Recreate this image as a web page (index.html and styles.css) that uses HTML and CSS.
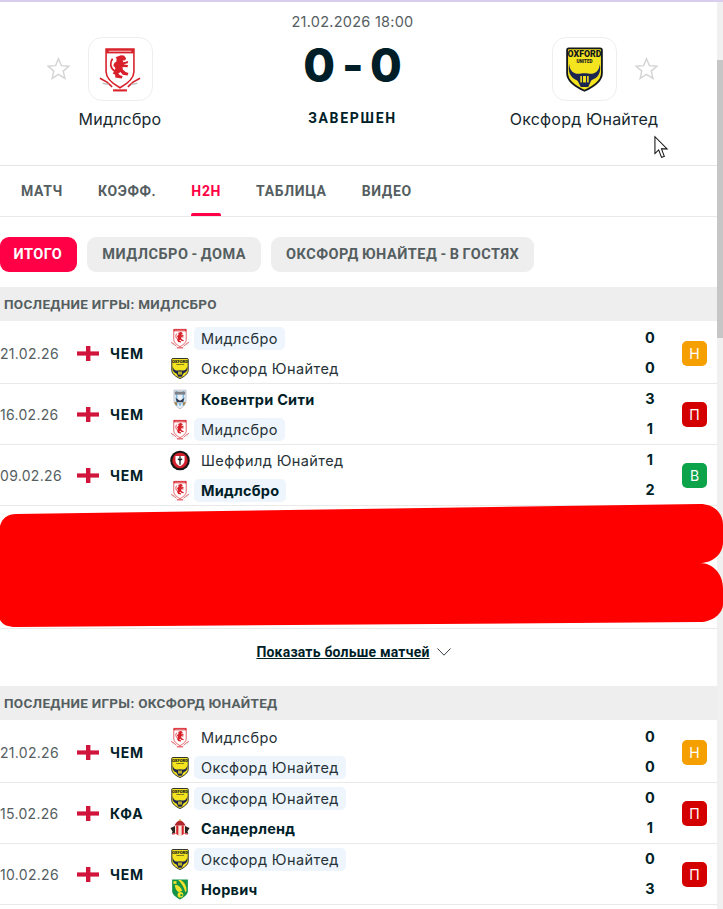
FILE: index.html
```html
<!DOCTYPE html>
<html lang="ru">
<head>
<meta charset="utf-8">
<title>Мидлсбро - Оксфорд Юнайтед</title>
<link rel="stylesheet" href="styles.css">
</head>
<body>
<svg class="sprite" width="0" height="0" aria-hidden="true">
  <defs>
    <symbol id="star" viewBox="0 0 24 24"><path d="M12 1.800l3 7.200 7.800.6-5.900 5.100 1.800 7.600L12 18.200 5.300 22.300l1.800-7.600L1.200 9.600 9 9z" fill="none" stroke="#d4d4d4" stroke-width="1.500"/></symbol>
    <symbol id="flag" viewBox="0 0 22 15"><rect width="22" height="15" fill="#fff"/><rect x="9" width="4.400" height="15" fill="#d0143c"/><rect y="5.400" width="22" height="4.200" fill="#d0143c"/></symbol>
    <symbol id="mid" viewBox="0 0 48 54">
      <path d="M8 3.500h32v26c0 8-8 14-16 18.500C16 43.500 8 37.500 8 29.500z" fill="#fff" stroke="#d8202a" stroke-width="1.800"/>
      <rect x="8" y="3.500" width="32" height="5" fill="#d8202a"/>
      <rect x="11" y="5.400" width="26" height="1.200" fill="#f4c6c8"/>
      <path d="M25 10.500l3.500.5 2.500 3-1 2.400-3 .2 1 2 5.500-1.400-.6 2.600-4.900 1.300 5.500 1-1 2.400-5.500-.4.2 3 3.200 2.800 3.300 1-1 3-5.500-1-2.600-3-2.600 1.600 2 2.200 3 .8-1 2.800-7.500-1.200v-3l-2.800-1.400 2-3.400 1-3-2.400-3 1.400-3 2.200-1.600.2-3-1.200-1.800z" fill="#d8202a"/>
      <path d="M18 29C12.500 25 12 19 15.500 14.500" fill="none" stroke="#d8202a" stroke-width="2"/>
      <path d="M1 37l8 4.500 6 5.500M47 37l-8 4.500-6 5.500" fill="none" stroke="#d8202a" stroke-width="1.800"/>
      <path d="M4 43l7 1M44 43l-7 1" stroke="#b9bcc0" stroke-width="1.400"/>
      <path d="M16 51h16" stroke="#d8202a" stroke-width="2.400"/>
    </symbol>
    <symbol id="oxf" viewBox="0 0 40 48">
      <path d="M3 1.200h34a1.800 1.800 0 0 1 1.800 1.800v25c0 8-9 14.500-18.800 19C10.200 42.500 1.200 36 1.200 28V3A1.800 1.800 0 0 1 3 1.200z" fill="#f4e31f" stroke="#14181f" stroke-width="2"/>
      <text x="20" y="10.500" text-anchor="middle" class="oxf-a">OXFORD</text>
      <text x="20" y="16.500" text-anchor="middle" class="oxf-b">UNITED</text>
      <path d="M3.500 18c.5 6 3 9.500 8 10.500 2.500.5 5-.5 8.500-.5s6 1 8.500.5c5-1 7.500-4.500 8-10.500 1.500 7.500-.5 14-7 16.500-1.500.5-2.500 1.500-3 3l-2.500 5.500h-8L13.500 38c-.5-1.500-1.500-2.500-3-3C4 32 2 25.500 3.500 18z" fill="#1c2550"/>
      <path d="M15.500 31h9v7h-9z" fill="#f4e31f"/>
      <path d="M17.800 31v8M22.200 31v8" stroke="#1c2550" stroke-width="1.200"/>
    </symbol>
    <symbol id="cov" viewBox="0 0 40 56">
      <path d="M4 3h32v28c0 10-8 17-16 22C12 48 4 41 4 31z" fill="#eef1f5" stroke="#98a2ae" stroke-width="1.600"/>
      <path d="M11 5v40M29 5v40" stroke="#7fbbe4" stroke-width="4.500"/>
      <path d="M6 7h28v8H6z" fill="#7e8187"/>
      <path d="M8 23l12 8 12-8-4 12H12z" fill="#2f3a50"/>
      <path d="M5 34l7 2v8l-5-3zM35 34l-7 2v8l5-3z" fill="#a88747"/>
      <path d="M15 37h10l-5 10z" fill="#7fbbe4"/>
    </symbol>
    <symbol id="shf" viewBox="0 0 48 48">
      <circle cx="24" cy="24" r="23.500" fill="#151515"/>
      <circle cx="24" cy="24" r="18.500" fill="#d4202c"/>
      <path d="M13 13h22v11c0 6-5 11-11 14-6-3-11-8-11-14z" fill="#fff"/>
      <path d="M24 14v20M19 20l5 4 5-4" fill="none" stroke="#151515" stroke-width="3"/>
    </symbol>
    <symbol id="sun" viewBox="0 0 48 48">
      <path d="M11 17h26v15c0 5-6 9-13 11-7-2-13-6-13-11z" fill="#f6e7da"/>
      <path d="M15 17h5v23l-5-3zM28 17h5v20l-5 3z" fill="#d8202a"/>
      <path d="M11 17c2-7 7-11 13-13 6 2 11 6 13 13z" fill="#b2242d"/>
      <circle cx="24" cy="4" r="2.500" fill="#d8a74a"/>
      <path d="M1 23l11-5v16l-8 3 2-6zM47 23l-11-5v16l8 3-2-6z" fill="#2a2320"/>
      <path d="M5 37l8-3v3l-7 2zM43 37l-8-3v3l7 2z" fill="#d8202a"/>
    </symbol>
    <symbol id="nor" viewBox="0 0 40 48">
      <path d="M2 1h36v26c0 9-9 15-18 20C11 42 2 36 2 27z" fill="#159447"/>
      <path d="M16 2h6c8 5 13 13 13 24l-3 4C30 19 24 10 16 2z" fill="#f5e22a"/>
      <path d="M8 14c7-2 14 4 17 13l-8 3C12 27 9 21 8 14z" fill="#f5e22a"/>
      <circle cx="21" cy="36" r="6.500" fill="#f5e22a"/>
      <circle cx="23" cy="37" r="2.500" fill="#159447"/>
      <path d="M5 5h7v6H5z" fill="#f5e22a"/>
    </symbol>
  </defs>
</svg>

<div class="page">
  <main class="main">
    <header class="match">
      <div class="match-date">21.02.2026 18:00</div>
      <div class="match-teams">
        <div class="side side-home">
          <svg class="star"><use href="#star"/></svg>
          <div class="team-block">
            <div class="tile"><svg class="tile-logo tile-mid"><use href="#mid"/></svg></div>
            <div class="team-name">Мидлсбро</div>
          </div>
        </div>
        <div class="centre">
          <div class="score"><span>0</span><span class="dash">-</span><span>0</span></div>
          <div class="status">ЗАВЕРШЕН</div>
        </div>
        <div class="side side-away">
          <div class="team-block">
            <div class="tile"><svg class="tile-logo tile-oxf"><use href="#oxf"/></svg></div>
            <div class="team-name">Оксфорд Юнайтед</div>
          </div>
          <svg class="star"><use href="#star"/></svg>
        </div>
      </div>
      <svg class="cursor" viewBox="0 0 16 24"><path d="M1 1v18l4-4 3 8 3-1-3-8h6z" fill="#fff" stroke="#111" stroke-width="1.100"/></svg>
    </header>

    <nav class="tabs">
      <a class="tab">МАТЧ</a>
      <a class="tab">КОЭФФ.</a>
      <a class="tab tab-active">H2H</a>
      <a class="tab">ТАБЛИЦА</a>
      <a class="tab">ВИДЕО</a>
    </nav>

    <div class="pills">
      <a class="pill pill-active">ИТОГО</a>
      <a class="pill">МИДЛСБРО - ДОМА</a>
      <a class="pill">ОКСФОРД ЮНАЙТЕД - В ГОСТЯХ</a>
    </div>

    <section>
      <h2 class="section-head">ПОСЛЕДНИЕ ИГРЫ: МИДЛСБРО</h2>
      <div class="row">
        <div class="date">21.02.26</div><svg class="flag"><use href="#flag"/></svg><div class="comp">ЧЕМ</div>
        <div class="teams">
          <div class="line"><svg class="logo"><use href="#mid"/></svg><span class="tname hl">Мидлсбро</span></div>
          <div class="line"><svg class="logo"><use href="#oxf"/></svg><span class="tname">Оксфорд Юнайтед</span></div>
        </div>
        <div class="goals"><span>0</span><span>0</span></div>
        <div class="res res-d">Н</div>
      </div>
      <div class="row">
        <div class="date">16.02.26</div><svg class="flag"><use href="#flag"/></svg><div class="comp">ЧЕМ</div>
        <div class="teams">
          <div class="line"><svg class="logo"><use href="#cov"/></svg><span class="tname win">Ковентри Сити</span></div>
          <div class="line"><svg class="logo"><use href="#mid"/></svg><span class="tname hl">Мидлсбро</span></div>
        </div>
        <div class="goals"><span>3</span><span>1</span></div>
        <div class="res res-l">П</div>
      </div>
      <div class="row">
        <div class="date">09.02.26</div><svg class="flag"><use href="#flag"/></svg><div class="comp">ЧЕМ</div>
        <div class="teams">
          <div class="line"><svg class="logo"><use href="#shf"/></svg><span class="tname">Шеффилд Юнайтед</span></div>
          <div class="line"><svg class="logo"><use href="#mid"/></svg><span class="tname hl win">Мидлсбро</span></div>
        </div>
        <div class="goals"><span>1</span><span>2</span></div>
        <div class="res res-w">В</div>
      </div>
      <div class="redacted">
        <svg class="scribble" viewBox="0 0 723 124"><path d="M0 22C2 14 8 10 16 10L700 0C714 0 723 9 723 21V38C723 50 713 59 700 59C713 59 723 70 723 84V100C723 110 712 118 700 118L16 123C8 123 3 121 0 116z" fill="#ff0000"/></svg>
      </div>
      <div class="more"><a class="more-link">Показать больше матчей</a><svg class="chev" viewBox="0 0 14 8"><path d="M.5.500L7 7.200 13.500.500" fill="none" stroke="#333f48" stroke-width="1"/></svg></div>
    </section>

    <section>
      <h2 class="section-head">ПОСЛЕДНИЕ ИГРЫ: ОКСФОРД ЮНАЙТЕД</h2>
      <div class="row">
        <div class="date">21.02.26</div><svg class="flag"><use href="#flag"/></svg><div class="comp">ЧЕМ</div>
        <div class="teams">
          <div class="line"><svg class="logo"><use href="#mid"/></svg><span class="tname">Мидлсбро</span></div>
          <div class="line"><svg class="logo"><use href="#oxf"/></svg><span class="tname hl">Оксфорд Юнайтед</span></div>
        </div>
        <div class="goals"><span>0</span><span>0</span></div>
        <div class="res res-d">Н</div>
      </div>
      <div class="row">
        <div class="date">15.02.26</div><svg class="flag"><use href="#flag"/></svg><div class="comp">КФА</div>
        <div class="teams">
          <div class="line"><svg class="logo"><use href="#oxf"/></svg><span class="tname hl">Оксфорд Юнайтед</span></div>
          <div class="line"><svg class="logo"><use href="#sun"/></svg><span class="tname win">Сандерленд</span></div>
        </div>
        <div class="goals"><span>0</span><span>1</span></div>
        <div class="res res-l">П</div>
      </div>
      <div class="row">
        <div class="date">10.02.26</div><svg class="flag"><use href="#flag"/></svg><div class="comp">ЧЕМ</div>
        <div class="teams">
          <div class="line"><svg class="logo"><use href="#oxf"/></svg><span class="tname hl">Оксфорд Юнайтед</span></div>
          <div class="line"><svg class="logo"><use href="#nor"/></svg><span class="tname win">Норвич</span></div>
        </div>
        <div class="goals"><span>0</span><span>3</span></div>
        <div class="res res-l">П</div>
      </div>
    </section>
  </main>
  <aside class="scrollbar"><div class="thumb"></div></aside>
</div>
</body>
</html>
```

FILE: styles.css
```css
* { box-sizing: border-box; }
html, body { margin: 0; padding: 0; height: 909px; overflow: hidden; background: #fff; }
body { font-family: Inter, "Liberation Sans", sans-serif; color: #001e28; }
.sprite { position: absolute; }
.oxf-a { font-family: Roboto, sans-serif; font-weight: 900; font-size: 9.500px; fill: #14181f; }
.oxf-b { font-family: Roboto, sans-serif; font-weight: 900; font-size: 5px; fill: #14181f; }
.page { display: flex; height: 909px; border-top: 2px solid #d9cdf0; }
.main { width: 717px; flex: none; }
.scrollbar { flex: 1; background: #f0f0f0; padding-top: 58px; }
.thumb { height: 278px; background: #c6c6c6; }

.match { position: relative; height: 164px; border-bottom: 1px solid #e6e6e6; padding-top: 11px; }
.match-date { text-align: center; font-size: 14.500px; line-height: 18px; color: #555e61; margin-right: 12px; letter-spacing: .25px; }
.match-teams { display: grid; grid-template-columns: 290px 1fr 290px; margin-top: 6px; }
.side { display: flex; align-items: flex-start; }
.side-home { padding-left: 47px; }
.side-away { justify-content: flex-end; margin-right: -3px; padding-right: 62px; }
.star { width: 23px; height: 23px; margin-top: 20px; flex: none; }
.side-home .star { margin-right: 18px; }
.side-away .star { margin-left: 19px; }
.team-block { width: 64px; display: flex; flex-direction: column; align-items: center; }
.tile { width: 65px; height: 64px; flex: none; border: 1px solid #eeeeee; border-radius: 14px; display: flex; align-items: center; justify-content: center; background: #fff; }
.tile-logo { display: block; }
.tile-mid { width: 42px; height: 47px; }
.tile-oxf { width: 37px; height: 45px; }
.team-name { font-size: 16px; line-height: 20px; margin-top: 8px; white-space: nowrap; color: #18282f; letter-spacing: .2px; }
.centre { display: flex; flex-direction: column; align-items: center; margin-right: 12px; }
.score { display: flex; align-items: center; gap: 7px; height: 56px; font-weight: 800; font-size: 46px; line-height: 56px; color: #001e28; }
.score .dash { width: 21px; text-align: center; }
.status { margin-top: 16px; font-family: Roboto, sans-serif; font-weight: 700; font-size: 14px; line-height: 18px; letter-spacing: 1.700px; }
.cursor { position: absolute; left: 654px; top: 133px; width: 15px; height: 24px; }

.tabs { display: flex; height: 51px; border-bottom: 1px solid #e9e9e9; padding-left: 21px; gap: 35px; }
.tab { position: relative; font-family: Roboto, sans-serif; font-weight: 700; font-size: 14px; line-height: 50px; letter-spacing: .65px; color: #555e61; }
.tab-active { color: #ff0046; }
.tab-active::after { content: ""; position: absolute; left: 0; right: 0; bottom: 0; height: 3px; background: #ff0046; border-radius: 2px 2px 0 0; }

.pills { display: flex; gap: 10px; padding: 20px 0 15px; }
.pill { height: 35px; border-radius: 9px; background: #eeeeee; color: #555e61; font-family: Roboto, sans-serif; font-weight: 700; font-size: 14.500px; line-height: 35px; padding: 0 15px; letter-spacing: .5px; word-spacing: -1px; white-space: nowrap; }
.pill-active { background: #ff0046; color: #fff; padding: 0 15px 0 13.500px; }

.section-head { margin: 0 0 2px; height: 34px; background: #eeeeee; padding-left: 4px; font-family: Roboto, sans-serif; font-weight: 700; font-size: 13.500px; line-height: 34px; letter-spacing: .3px; color: #555e61; }

.row { display: flex; align-items: center; height: 61px; border-bottom: 1px solid #e9e9e9; }
.date { width: 77px; flex: none; font-size: 14px; letter-spacing: .3px; color: #555e61; }
.flag { width: 22px; height: 15px; flex: none; }
.comp { width: 71px; flex: none; padding-left: 11px; font-size: 14px; font-weight: 700; letter-spacing: .8px; color: #001e28; }
.teams { flex: 1; display: flex; flex-direction: column; gap: 6px; }
.line { display: flex; align-items: center; height: 24px; }
.logo { width: 20px; height: 21px; flex: none; margin-right: 4px; }
.tname { font-size: 14.500px; line-height: 23px; padding: 0 7px; border-radius: 5px; color: #263238; white-space: nowrap; letter-spacing: .4px; }
.tname.hl { background: #eef5fc; }
.tname.win { font-weight: 700; color: #001e28; letter-spacing: .25px; }
.goals { width: 36px; flex: none; display: flex; flex-direction: column; gap: 12px; align-items: center; font-size: 14.500px; font-weight: 700; line-height: 18px; margin-right: 14px; }
.res { width: 25px; height: 25px; flex: none; margin-right: 10px; border-radius: 5px; color: #fff; text-align: center; font-size: 14px; line-height: 25px; }
.res-d { background: #f5a000; }
.res-l { background: #d40000; }
.res-w { background: #0ca34a; }

.redacted { position: relative; height: 123px; border-bottom: 1px solid #e9e9e9; }
.scribble { position: absolute; left: 0; top: -2px; width: 723px; height: 124px; }
.more { height: 57px; display: flex; align-items: center; justify-content: center; gap: 7px; padding: 0 10px 11px 0; }
.more-link { font-family: Roboto, sans-serif; font-weight: 700; font-size: 14px; letter-spacing: .2px; text-decoration: underline; color: #001e28; }
.chev { width: 14px; height: 8px; }
```
